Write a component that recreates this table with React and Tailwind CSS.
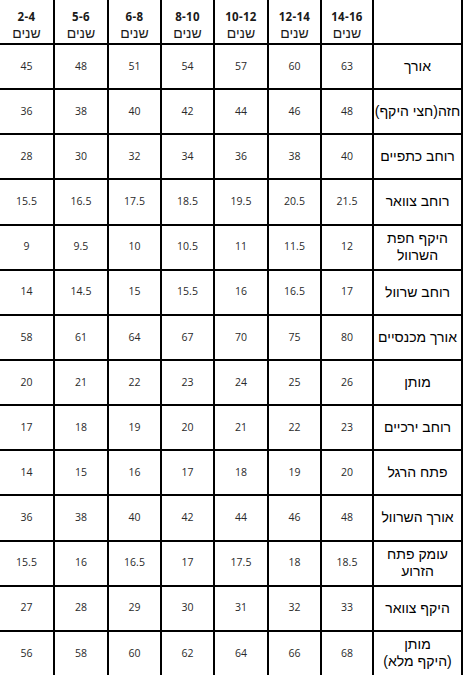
import React from "react";

const cols = ["2-4", "5-6", "6-8", "8-10", "10-12", "12-14", "14-16"];

const rows = [
  [["אורך"], [63, 60, 57, 54, 51, 48, 45]],
  [["חזה(חצי היקף)"], [48, 46, 44, 42, 40, 38, 36]],
  [["רוחב כתפיים"], [40, 38, 36, 34, 32, 30, 28]],
  [["רוחב צוואר"], [21.5, 20.5, 19.5, 18.5, 17.5, 16.5, 15.5]],
  [["היקף חפת", "השרוול"], [12, 11.5, 11, 10.5, 10, 9.5, 9]],
  [["רוחב שרוול"], [17, 16.5, 16, 15.5, 15, 14.5, 14]],
  [["אורך מכנסיים"], [80, 75, 70, 67, 64, 61, 58]],
  [["מותן"], [26, 25, 24, 23, 22, 21, 20]],
  [["רוחב ירכיים"], [23, 22, 21, 20, 19, 18, 17]],
  [["פתח הרגל"], [20, 19, 18, 17, 16, 15, 14]],
  [["אורך השרוול"], [48, 46, 44, 42, 40, 38, 36]],
  [["עומק פתח", "הזרוע"], [18.5, 18, 17.5, 17, 16.5, 16, 15.5]],
  [["היקף צוואר"], [33, 32, 31, 30, 29, 28, 27]],
  [["מותן", "(היקף מלא)"], [68, 66, 64, 62, 60, 58, 56]],
];

const numFont = { fontFamily: '"Open Sans", "Liberation Sans", sans-serif' };
const hebFont = { fontFamily: '"Liberation Sans", Arial, "DejaVu Sans", sans-serif' };

export default function App() {
  return (
    <div className="w-[464px] h-[675px] bg-white overflow-hidden">
      <div className="w-[463px] h-[675px] bg-black pr-[2px]">
        <div className="grid h-full grid-cols-[53px_52px_51px_51px_52px_51px_50px_87px] grid-rows-[43px_repeat(14,1fr)] gap-[2px]">
          {cols.map((c) => (
            <div key={c} className="bg-white flex flex-col items-center justify-start leading-[17px] pt-[8px] overflow-hidden">
              <span className="text-[11.5px] font-bold text-[#1a1a1a] tracking-[0.3px]" style={numFont}>{c}</span>
              <span dir="rtl" className="text-[14px] text-[#1a1a1a]" style={hebFont}>שנים</span>
            </div>
          ))}
          <div className="bg-white" />
          {rows.map(([label, vals], i) => (
            <React.Fragment key={i}>
              {[...vals].reverse().map((v, j) => (
                <div key={j} className="bg-white flex items-center justify-center text-[10.5px] text-[#2a2a2a]" style={numFont}>
                  {v}
                </div>
              ))}
              <div dir="rtl" className="bg-white flex flex-col items-center justify-center text-[14px] leading-[17px] text-black whitespace-nowrap" style={hebFont}>
                {label.map((l, k) => (
                  <span key={k}>{l}</span>
                ))}
              </div>
            </React.Fragment>
          ))}
        </div>
      </div>
    </div>
  );
}
